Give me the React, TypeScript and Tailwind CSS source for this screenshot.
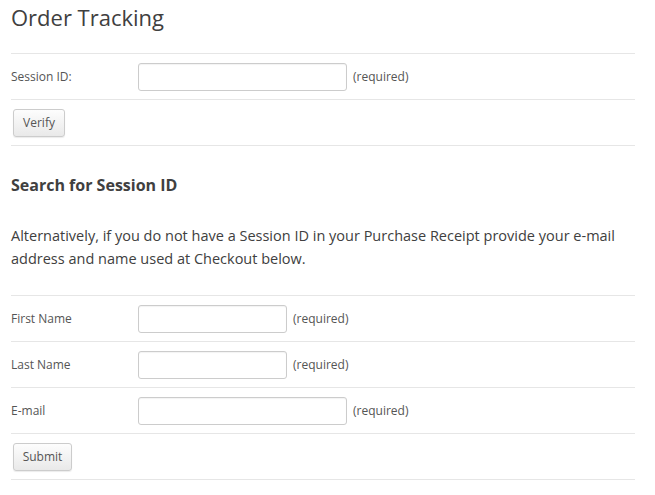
import React from "react";

const font = { fontFamily: '"Open Sans", "Liberation Sans", sans-serif' };

function Row({ children }: { children: React.ReactNode }) {
  return (
    <div className="flex h-[46px] items-center border-t border-[#e6e6e6]">{children}</div>
  );
}

function Field({ label, w }: { label: string; w: string }) {
  return (
    <Row>
      <div className="w-[127px] text-[12px] text-[#555]">{label}</div>
      <input
        className={`${w} h-[28px] rounded-[3px] border border-[#ccc] bg-white shadow-[inset_0_1px_1px_rgba(0,0,0,0.05)] outline-none`}
      />
      <span className="ml-[6px] text-[12px] text-[#555]">(required)</span>
    </Row>
  );
}

function Btn({ label, w }: { label: string; w: string }) {
  return (
    <Row>
      <button
        className={`${w} ml-[2px] h-[28px] rounded-[3px] border border-[#ccc] bg-gradient-to-b from-[#fdfdfd] to-[#e9e9e9] text-[12px] text-[#555] shadow-[0_1px_1px_rgba(0,0,0,0.08)]`}
      >
        {label}
      </button>
    </Row>
  );
}

export default function App() {
  return (
    <div className="min-h-[495px] bg-white" style={font}>
      <div className="w-[624px] pl-[11px] box-content">
        <h1 className="h-[53px] pt-[2px] text-[22px] leading-[30px] text-[#404040]">Order Tracking</h1>
        <Field label="Session ID:" w="w-[209px]" />
        <Btn label="Verify" w="w-[52px]" />
        <div className="border-t border-[#e6e6e6] pt-[27px]">
          <h2 className="text-[16px] font-bold leading-[24px] text-[#404040]">Search for Session ID</h2>
          <p className="mt-[27px] pb-[25px] text-[14.5px] leading-[23px] text-[#404040]">
            Alternatively, if you do not have a Session ID in your Purchase Receipt provide your e-mail address and name used at Checkout below.
          </p>
        </div>
        <Field label="First Name" w="w-[149px]" />
        <Field label="Last Name" w="w-[149px]" />
        <Field label="E-mail" w="w-[209px]" />
        <Btn label="Submit" w="w-[59px]" />
        <div className="border-t border-[#e6e6e6]" />
      </div>
    </div>
  );
}
